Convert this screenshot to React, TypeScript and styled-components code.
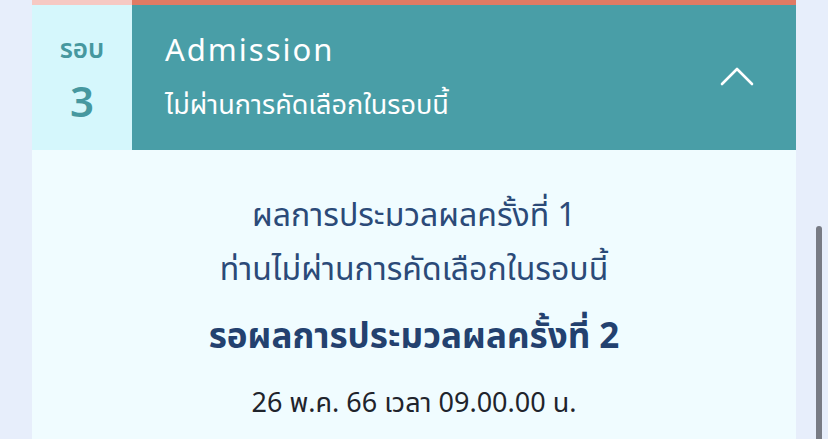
import React from "react";
import styled, { createGlobalStyle } from "styled-components";

const GlobalStyle = createGlobalStyle`
  html, body {
    margin: 0;
    padding: 0;
    background: #e7eefb;
    overflow: hidden;
  }
  body {
    font-family: "Noto Sans Thai", "Noto Sans", "Liberation Sans", sans-serif;
  }
`;

const Page = styled.div`
  position: relative;
  width: 828px;
  height: 439px;
  padding-left: 32px;
  box-sizing: border-box;
`;

const Card = styled.section`
  width: 764px;
  height: 100%;
  display: flex;
  flex-direction: column;
  background: #f0fcff;
`;

const TopStrip = styled.div`
  display: grid;
  grid-template-columns: 100px 1fr;
  height: 5px;
`;

const StripPart = styled.div<{ $color: string }>`
  background: ${(p) => p.$color};
`;

const Header = styled.header`
  display: grid;
  grid-template-columns: 100px 1fr;
  height: 145px;
`;

const RoundCell = styled.div`
  background: #d5f7fc;
  color: #46989f;
  display: flex;
  flex-direction: column;
  align-items: center;
  padding-top: 28px;
`;

const RoundLabel = styled.div`
  font-size: 26px;
  font-weight: 600;
  line-height: 34px;
`;

const RoundNumber = styled.div`
  font-size: 42px;
  font-weight: 600;
  line-height: 50px;
  margin-top: 12px;
`;

const TitleCell = styled.div`
  background: #499ea7;
  color: #ffffff;
  display: flex;
  align-items: center;
  justify-content: space-between;
  padding: 2px 42px 0 33px;
`;

const TitleText = styled.div`
  display: flex;
  flex-direction: column;
`;

const Title = styled.h2`
  margin: 0;
  font-size: 31px;
  font-weight: 400;
  letter-spacing: 2px;
  line-height: 42px;
`;

const Subtitle = styled.div`
  font-size: 27px;
  line-height: 40px;
  margin-top: 13px;
`;

const Chevron = styled.svg`
  width: 34px;
  height: 20px;
  margin-top: -4px;
`;

const Body = styled.div`
  display: flex;
  flex-direction: column;
  align-items: center;
  padding-top: 39px;
  color: #2b4a78;
  text-align: center;
`;

const Line = styled.div`
  font-size: 32px;
  line-height: 54px;
`;

const Highlight = styled.div`
  font-size: 35px;
  font-weight: 700;
  line-height: 42px;
  margin-top: 20px;
  color: #23416f;
`;

const DateText = styled.div`
  font-size: 27px;
  line-height: 30px;
  margin-top: 30px;
  color: #1f242c;
`;

const ScrollThumb = styled.div`
  position: absolute;
  left: 816px;
  top: 226px;
  width: 6px;
  height: 230px;
  border-radius: 3px;
  background: #787b84;
`;

export default function App() {
  return (
    <>
      <GlobalStyle />
      <Page>
        <Card>
          <TopStrip>
            <StripPart $color="#f6c9c3" />
            <StripPart $color="#e07a64" />
          </TopStrip>
          <Header>
            <RoundCell>
              <RoundLabel>รอบ</RoundLabel>
              <RoundNumber>3</RoundNumber>
            </RoundCell>
            <TitleCell>
              <TitleText>
                <Title>Admission</Title>
                <Subtitle>ไม่ผ่านการคัดเลือกในรอบนี้</Subtitle>
              </TitleText>
              <Chevron viewBox="0 0 34 20" fill="none">
                <path
                  d="M2 17 L17 2 L32 17"
                  stroke="#ffffff"
                  strokeWidth="2.6"
                  strokeLinecap="round"
                  strokeLinejoin="round"
                />
              </Chevron>
            </TitleCell>
          </Header>
          <Body>
            <Line>ผลการประมวลผลครั้งที่ 1</Line>
            <Line>ท่านไม่ผ่านการคัดเลือกในรอบนี้</Line>
            <Highlight>รอผลการประมวลผลครั้งที่ 2</Highlight>
            <DateText>26 พ.ค. 66 เวลา 09.00.00 น.</DateText>
          </Body>
        </Card>
        <ScrollThumb />
      </Page>
    </>
  );
}
